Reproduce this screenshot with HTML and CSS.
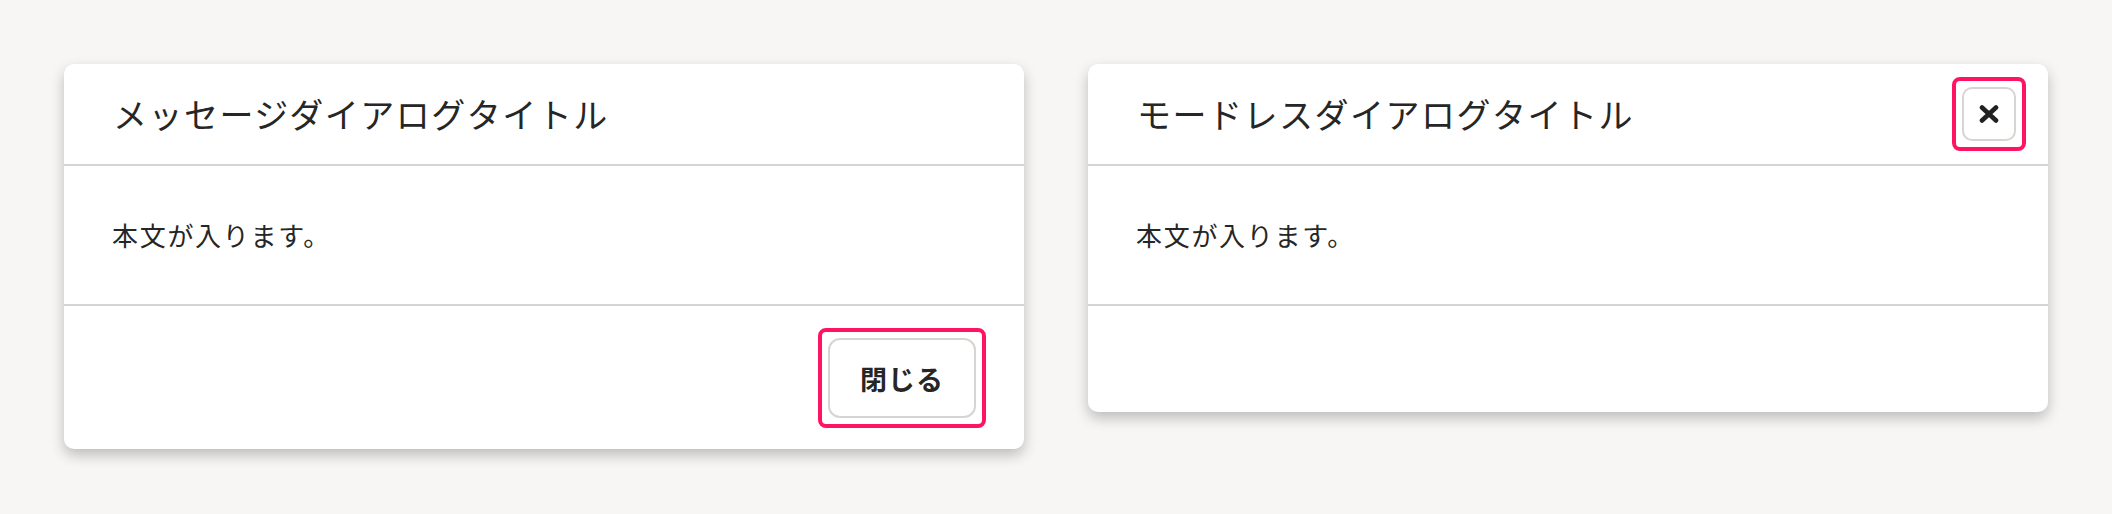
FILE: index.html
```html
<!DOCTYPE html>
<html lang="ja">
<head>
<meta charset="utf-8">
<title>Dialogs</title>
<link rel="stylesheet" href="styles.css">
</head>
<body>
<main class="page">
  <section class="dialog" role="dialog" aria-labelledby="t1">
    <header class="dialog-header">
      <h2 class="dialog-title" id="t1">メッセージダイアログタイトル</h2>
    </header>
    <div class="dialog-body">
      <p class="dialog-text">本文が入ります。</p>
    </div>
    <footer class="dialog-footer">
      <button class="btn btn-focus" type="button">閉じる</button>
    </footer>
  </section>
  <section class="dialog" role="dialog" aria-labelledby="t2">
    <header class="dialog-header">
      <h2 class="dialog-title" id="t2">モードレスダイアログタイトル</h2>
      <button class="close-btn btn-focus" type="button" aria-label="閉じる">
        <svg class="close-icon" viewBox="0 0 20 18" width="20" height="18" aria-hidden="true">
          <path d="M3 2.5 L17 15.5 M17 2.5 L3 15.5" stroke="#222" stroke-width="4.6" stroke-linecap="round" fill="none"/>
        </svg>
      </button>
    </header>
    <div class="dialog-body">
      <p class="dialog-text">本文が入ります。</p>
    </div>
    <footer class="dialog-footer dialog-footer-empty"></footer>
  </section>
</main>
</body>
</html>
```
FILE: styles.css
```css
* { box-sizing: border-box; }
html, body { margin: 0; padding: 0; }
body {
  background: #f7f6f4;
  font-family: "Noto Sans CJK JP", "Noto Sans", sans-serif;
  color: #262626;
}
.page {
  display: flex;
  align-items: flex-start;
  gap: 64px;
  padding: 64px;
}
.dialog {
  width: 960px;
  flex: 0 0 960px;
  background: #fff;
  border-radius: 10px;
  box-shadow: 0 6px 14px rgba(0, 0, 0, 0.24);
}
.dialog-header {
  height: 102px;
  display: flex;
  align-items: center;
  justify-content: space-between;
  padding: 0 32px 0 49px;
  border-bottom: 2px solid #d8d4d1;
}
.dialog-title {
  margin: 0;
  font-size: 34px;
  font-weight: 400;
  letter-spacing: 1.5px;
  line-height: 1.4;
}
.dialog-body {
  height: 140px;
  display: flex;
  align-items: center;
  padding: 0 48px;
  border-bottom: 2px solid #d8d4d1;
}
.dialog-text {
  margin: 0;
  font-size: 26px;
  letter-spacing: 1.7px;
  line-height: 1.6;
}
.dialog-footer {
  display: flex;
  justify-content: flex-end;
  padding: 32px 48px 31px;
}
.dialog-footer-empty {
  height: 106px;
}
.btn {
  width: 148px;
  height: 80px;
  background: #fff;
  border: 2px solid #d8d4d1;
  border-radius: 12px;
  font-family: inherit;
  font-size: 27px;
  font-weight: 700;
  letter-spacing: 1px;
  color: #262626;
  padding: 0;
}
.btn-focus {
  position: relative;
  outline: none;
}
.btn-focus::after {
  content: "";
  position: absolute;
  inset: -12px;
  border: 4px solid #ff1464;
  border-radius: 8px;
  pointer-events: none;
}
.close-btn {
  width: 54px;
  height: 54px;
  flex: 0 0 54px;
  background: #fff;
  border: 2px solid #d8d4d1;
  border-radius: 10px;
  padding: 0;
  display: flex;
  align-items: center;
  justify-content: center;
}
.close-icon { display: block; }
```
